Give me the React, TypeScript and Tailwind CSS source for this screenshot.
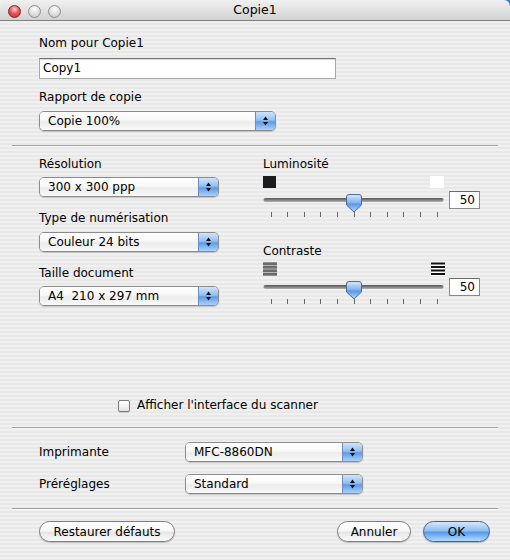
import React from 'react';

const ticks = Array.from({ length: 11 }, (_, i) => 7.5 + i * 16.6);

const Arrows = () => (
    <svg width="7" height="12" viewBox="0 0 7 12">
        <path d="M3.5 1.5L6 5H1Z" fill="#111" />
        <path d="M3.5 10.5L6 7H1Z" fill="#111" />
    </svg>
);

const Popup = ({ value, className }: { value: string; className: string }) => (
    <div className={`flex h-[20px] items-stretch overflow-hidden rounded-[5px] border border-[#8c8c8c] shadow-[0_1px_1px_rgba(0,0,0,0.18)] ${className}`}>
        <div className="flex flex-1 items-center bg-[linear-gradient(180deg,#ffffff_0%,#f8f8f8_45%,#ececec_55%,#f9f9f9_100%)] pl-[8px] text-[12px] leading-none text-black">
            {value}
        </div>
        <div className="flex w-[20px] items-center justify-center border-l border-[#6b8ec2] bg-[linear-gradient(180deg,#cfe4fb_0%,#93c0f1_45%,#5f9ae6_55%,#aad3fb_100%)]">
            <Arrows />
        </div>
    </div>
);

const Slider = () => (
    <div className="flex items-start gap-[5px]">
        <svg width="181" height="27" viewBox="0 0 181 27">
            <defs>
                <linearGradient id="track" x1="0" y1="0" x2="0" y2="1">
                    <stop offset="0%" stopColor="#555" />
                    <stop offset="60%" stopColor="#8a8a8a" />
                    <stop offset="100%" stopColor="#b5b5b5" />
                </linearGradient>
                <linearGradient id="thumb" x1="0" y1="0" x2="0" y2="1">
                    <stop offset="0%" stopColor="#d6e8fc" />
                    <stop offset="45%" stopColor="#84b6ef" />
                    <stop offset="55%" stopColor="#5a97e4" />
                    <stop offset="100%" stopColor="#b6dafd" />
                </linearGradient>
            </defs>
            <rect x="0.5" y="7" width="180" height="4" rx="2" fill="url(#track)" />
            {ticks.map((x) => (
                <line key={x} x1={Math.round(x) + 0.5} y1="21" x2={Math.round(x) + 0.5} y2="26" stroke="#666" strokeWidth="1" />
            ))}
            <path d="M86 3.5H96Q98.5 3.5 98.5 6V14L91 21L83.5 14V6Q83.5 3.5 86 3.5Z" fill="url(#thumb)" stroke="#4a6b9c" strokeWidth="1" />
        </svg>
        <div className="flex h-[18px] w-[31px] items-center justify-end border border-[#8a8a8a] border-t-[#6a6a6a] bg-white pr-[4px] text-[12px] leading-none">
            50
        </div>
    </div>
);

const Separator = ({ className }: { className: string }) => (
    <div className={`mx-[12px] h-[2px] border-t border-[#a3a3a3] border-b border-b-[#f8f8f8] ${className}`} />
);

const Light = () => (
    <div className="h-[13px] w-[13px] rounded-full border border-[#8f8f8f] bg-[radial-gradient(circle_at_50%_30%,#ffffff_0%,#e2e2e2_45%,#c4c4c4_100%)]" />
);

const App: React.FC = () => {
    return (
        <div className="h-[560px] w-[510px] overflow-hidden bg-[linear-gradient(90deg,#f0f0f0_90%,#3f74cc_100%)] font-['DejaVu_Sans',sans-serif] text-black">
            <div className="flex h-full flex-col overflow-hidden rounded-t-[6px]">
                {/* title bar */}
                <div className="relative flex h-[21px] shrink-0 items-center justify-center border-b border-[#7f7f7f] bg-[linear-gradient(180deg,#f0f0f0_0%,#e2e2e2_50%,#d2d2d2_100%)]">
                    <div className="absolute left-[8px] top-[5px] flex gap-[7px]">
                        <div className="h-[13px] w-[13px] rounded-full border border-[#7a2a2a] bg-[radial-gradient(circle_at_50%_30%,#ffd0d0_0%,#ea5a5a_45%,#b82828_100%)]" />
                        <Light />
                        <Light />
                    </div>
                    <span className="text-[12.5px] leading-none">Copie1</span>
                </div>

                {/* body */}
                <div className="flex flex-1 flex-col bg-[repeating-linear-gradient(180deg,#f0f0f0_0px,#f0f0f0_2px,#e8e8e8_2px,#e8e8e8_4px)] text-[12px] leading-[15px]">
                    <div className="pl-[39px] pt-[15px]">
                        <div className="h-[15px]">Nom pour Copie1</div>
                        <div className="mt-[7px] flex h-[21px] w-[297px] items-center border border-[#a9a9a9] border-t-[#6f6f6f] bg-white pl-[3px] shadow-[inset_0_1px_1px_rgba(0,0,0,0.15)]">
                            Copy1
                        </div>
                        <div className="mt-[11px] h-[15px]">Rapport de copie</div>
                        <Popup value="Copie 100%" className="mt-[6px] w-[237px]" />
                    </div>

                    <Separator className="mt-[14px]" />

                    <div className="mt-[10px] flex pl-[39px]">
                        <div className="flex w-[224px] flex-col">
                            <div className="h-[15px]">Résolution</div>
                            <Popup value="300 x 300 ppp" className="mt-[5px] w-[180px]" />
                            <div className="mt-[14px] h-[15px]">Type de numérisation</div>
                            <Popup value="Couleur 24 bits" className="mt-[6px] w-[180px]" />
                            <div className="mt-[14px] h-[15px]">Taille document</div>
                            <Popup value="A4  210 x 297 mm" className="mt-[5px] w-[180px] whitespace-pre" />
                        </div>
                        <div className="flex flex-col">
                            <div className="h-[15px]">Luminosité</div>
                            <div className="mt-[4px] flex w-[181px] justify-between">
                                <div className="h-[12px] w-[13px] bg-[#1c1c1e]" />
                                <div className="h-[12px] w-[14px] bg-white" />
                            </div>
                            <div className="mt-[3px]">
                                <Slider />
                            </div>
                            <div className="mt-[26px] h-[15px]">Contraste</div>
                            <div className="mt-[3px] flex w-[182px] justify-between">
                                <svg width="14" height="14" viewBox="0 0 14 14">
                                    <rect x="0" y="0" width="14" height="14" fill="#b8b8b8" />
                                    <rect x="0" y="0.5" width="14" height="2.5" fill="#6a6a6a" />
                                    <rect x="0" y="4" width="14" height="2.5" fill="#6a6a6a" />
                                    <rect x="0" y="7.5" width="14" height="2.5" fill="#6a6a6a" />
                                    <rect x="0" y="11" width="14" height="2.5" fill="#6a6a6a" />
                                </svg>
                                <svg width="14" height="14" viewBox="0 0 14 14">
                                    <rect x="0" y="0" width="14" height="14" fill="#ffffff" />
                                    <rect x="0" y="0.5" width="14" height="2" fill="#111" />
                                    <rect x="0" y="4" width="14" height="2" fill="#111" />
                                    <rect x="0" y="7.5" width="14" height="2" fill="#111" />
                                    <rect x="0" y="11" width="14" height="2" fill="#111" />
                                </svg>
                            </div>
                            <div className="mt-[2px]">
                                <Slider />
                            </div>
                        </div>
                    </div>

                    <div className="ml-[118px] mt-[92px] flex h-[15px] items-center gap-[7px]">
                        <div className="h-[12px] w-[12px] rounded-[2px] border border-[#7c7c7c] bg-[linear-gradient(180deg,#ffffff_0%,#f2f2f2_50%,#e2e2e2_100%)] shadow-[0_1px_1px_rgba(0,0,0,0.15)]" />
                        <span>Afficher l'interface du scanner</span>
                    </div>

                    <Separator className="mt-[14px]" />

                    <div className="mt-[13px] flex h-[20px] items-center pl-[39px]">
                        <div className="w-[146px]">Imprimante</div>
                        <Popup value="MFC-8860DN" className="w-[178px]" />
                    </div>
                    <div className="mt-[12px] flex h-[20px] items-center pl-[39px]">
                        <div className="w-[146px]">Préréglages</div>
                        <Popup value="Standard" className="w-[178px]" />
                    </div>

                    <Separator className="mt-[14px]" />

                    <div className="mt-[11px] flex h-[21px] items-stretch pl-[39px] pr-[20px]">
                        <button className="w-[136px] rounded-full border border-[#7d7d7d] bg-[linear-gradient(180deg,#ffffff_0%,#f7f7f7_45%,#e6e6e6_55%,#fbfbfb_100%)] text-[12px] leading-none shadow-[0_1px_1px_rgba(0,0,0,0.2)]">
                            Restaurer défauts
                        </button>
                        <div className="flex-1" />
                        <button className="w-[74px] rounded-full border border-[#7d7d7d] bg-[linear-gradient(180deg,#ffffff_0%,#f7f7f7_45%,#e6e6e6_55%,#fbfbfb_100%)] text-[12px] leading-none shadow-[0_1px_1px_rgba(0,0,0,0.2)]">
                            Annuler
                        </button>
                        <button className="ml-[12px] w-[67px] rounded-full border border-[#3b64a3] bg-[linear-gradient(180deg,#d4e8fc_0%,#8fc0f3_45%,#5b9ae8_55%,#b3dcff_100%)] text-[12px] leading-none shadow-[0_1px_1px_rgba(0,0,0,0.25)]">
                            OK
                        </button>
                    </div>
                </div>
            </div>
        </div>
    );
};

export default App;
